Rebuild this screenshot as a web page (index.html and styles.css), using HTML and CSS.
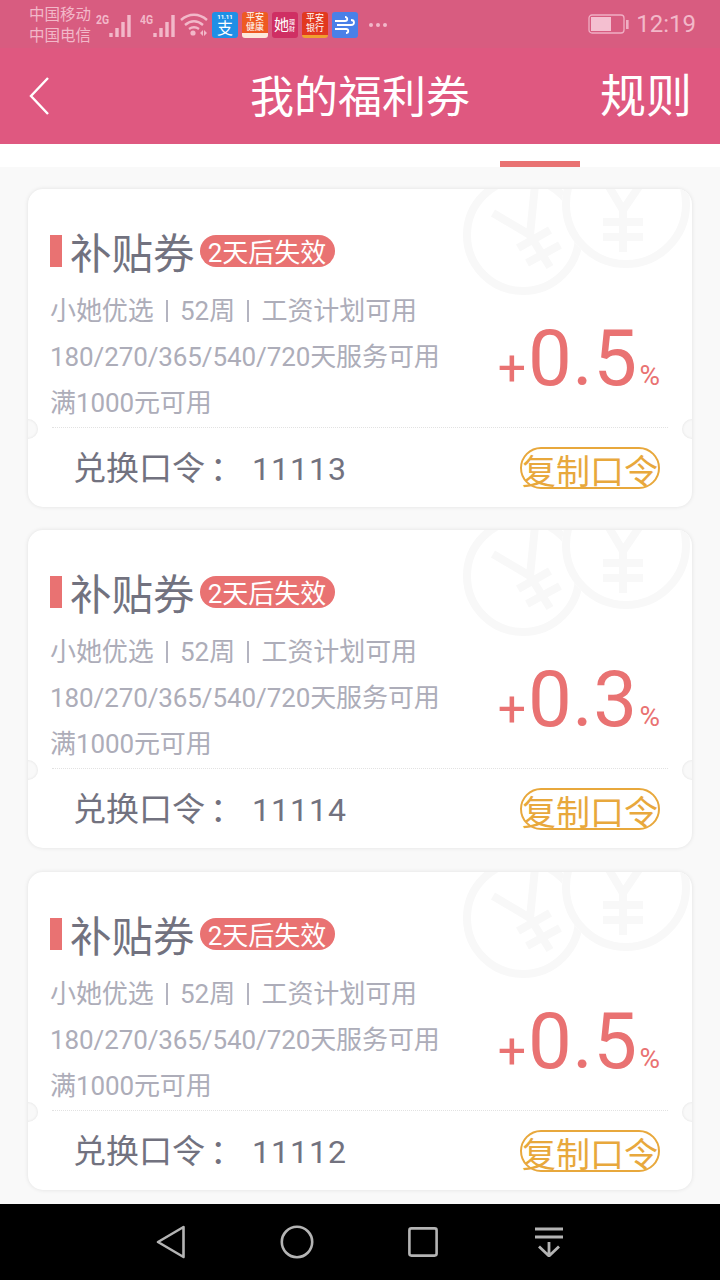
FILE: index.html
```html
<!DOCTYPE html>
<html lang="zh">
<head>
<meta charset="utf-8">
<title>我的福利券</title>
<link rel="stylesheet" href="styles.css">
</head>
<body>
<svg class="defs" width="0" height="0" aria-hidden="true">
  <defs>
    <symbol id="coins" viewBox="0 0 234 170">
      <g stroke="#f8f8f8" stroke-width="8" fill="none">
        <circle cx="64" cy="46" r="56"/>
        <path d="M34 24 L71 46 L76 -4 M71 46 L91 78 M59 59 L91 41 M68 74 L101 56"/>
      </g>
      <circle cx="167" cy="15" r="64" fill="#fff"/>
      <g stroke="#f8f8f8" stroke-width="8" fill="none">
        <circle cx="167" cy="15" r="60"/>
        <path d="M149 -4 L164 21 L181 -4 M164 21 V63 M144 33 H184 M144 48 H184"/>
      </g>
    </symbol>
  </defs>
</svg>
<div class="screen">
  <div class="status">
    <div class="carriers"><span>中国移动</span><span>中国电信</span></div>
    <div class="sig">
      <span class="net">2G</span>
      <svg width="24" height="26" viewBox="0 0 24 26"><path d="M2 21v4M8 16v9M14 10v15M20 3v22" stroke="#f2b8c9" stroke-width="3.4" fill="none"/></svg>
    </div>
    <div class="sig">
      <span class="net">4G</span>
      <svg width="24" height="26" viewBox="0 0 24 26"><path d="M2 21v4M8 16v9M14 10v15M20 3v22" stroke="#f2b8c9" stroke-width="3.4" fill="none"/></svg>
    </div>
    <svg class="wifi" width="28" height="24" viewBox="0 0 28 24"><g fill="none" stroke="#f2b8c9" stroke-width="2.4"><path d="M1 7c8-7 18-7 26 0M5 12c6-5 12-5 18 0M9 16c3-2 7-2 10 0"/></g><circle cx="13" cy="20" r="2.6" fill="#f2b8c9"/><path d="M20 20l3-3v6zM24 17l3 3-3 3z" fill="#f2b8c9"/></svg>
    <div class="apps">
      <div class="app app-blue"><span class="app-top">11.11</span><span class="app-big">支</span></div>
      <div class="app app-orange"><span class="app-mid">平安</span><span class="app-mid">健康</span></div>
      <div class="app app-pink"><span class="app-she">她</span><span class="app-side">理财</span></div>
      <div class="app app-red"><span class="app-mid">平安</span><span class="app-mid">银行</span></div>
      <div class="app app-wind"><svg width="22" height="18" viewBox="0 0 22 18"><path d="M1 5h10c3 0 3-4 0-4M3 9h14c4 0 4-5 0-5M1 13h11c3 0 3 4 0 4" fill="none" stroke="#fff" stroke-width="1.8"/></svg></div>
      <div class="dots"><i></i><i></i><i></i></div>
    </div>
    <div class="status-right">
      <svg width="41" height="22" viewBox="0 0 41 22"><rect x="1" y="2" width="35" height="18" rx="3" fill="none" stroke="#f0aec3" stroke-width="1.3"/><rect x="3" y="4" width="20" height="14" fill="#f4bfd0"/><rect x="38" y="7" width="2.6" height="9" fill="#f0aec3"/></svg>
      <span class="time">12:19</span>
    </div>
  </div>
  <header class="nav">
    <svg class="back" width="22" height="40" viewBox="0 0 22 40"><path d="M20 2 L3 20 L20 38" fill="none" stroke="#fff" stroke-width="2.4"/></svg>
    <h1 class="nav-title">我的福利券</h1>
    <span class="nav-rule">规则</span>
  </header>
  <div class="tabbar"><span class="tab-line"></span></div>
  <main class="list">
    <article class="card">
      <svg class="coins"><use href="#coins"/></svg>
      <span class="notch notch-l"></span><span class="notch notch-r"></span>
      <div class="card-body">
        <div class="card-left">
          <div class="title-row"><span class="mark"></span><span class="title">补贴券</span><span class="badge">2天后失效</span></div>
          <p class="line">小她优选<i class="sep"></i>52周<i class="sep"></i>工资计划可用</p>
          <p class="line">180/270/365/540/720天服务可用</p>
          <p class="line">满1000元可用</p>
        </div>
        <div class="amount"><span class="plus">+</span><span class="num">0.5</span><span class="pct">%</span></div>
      </div>
      <div class="card-foot">
        <div class="code"><span>兑换口令</span><span class="colon">：</span><span class="code-num">11113</span></div>
        <span class="copy">复制口令</span>
      </div>
    </article>
    <article class="card">
      <svg class="coins"><use href="#coins"/></svg>
      <span class="notch notch-l"></span><span class="notch notch-r"></span>
      <div class="card-body">
        <div class="card-left">
          <div class="title-row"><span class="mark"></span><span class="title">补贴券</span><span class="badge">2天后失效</span></div>
          <p class="line">小她优选<i class="sep"></i>52周<i class="sep"></i>工资计划可用</p>
          <p class="line">180/270/365/540/720天服务可用</p>
          <p class="line">满1000元可用</p>
        </div>
        <div class="amount"><span class="plus">+</span><span class="num">0.3</span><span class="pct">%</span></div>
      </div>
      <div class="card-foot">
        <div class="code"><span>兑换口令</span><span class="colon">：</span><span class="code-num">11114</span></div>
        <span class="copy">复制口令</span>
      </div>
    </article>
    <article class="card">
      <svg class="coins"><use href="#coins"/></svg>
      <span class="notch notch-l"></span><span class="notch notch-r"></span>
      <div class="card-body">
        <div class="card-left">
          <div class="title-row"><span class="mark"></span><span class="title">补贴券</span><span class="badge">2天后失效</span></div>
          <p class="line">小她优选<i class="sep"></i>52周<i class="sep"></i>工资计划可用</p>
          <p class="line">180/270/365/540/720天服务可用</p>
          <p class="line">满1000元可用</p>
        </div>
        <div class="amount"><span class="plus">+</span><span class="num">0.5</span><span class="pct">%</span></div>
      </div>
      <div class="card-foot">
        <div class="code"><span>兑换口令</span><span class="colon">：</span><span class="code-num">11112</span></div>
        <span class="copy">复制口令</span>
      </div>
    </article>
  </main>
  <nav class="sysnav">
    <svg width="30" height="34" viewBox="0 0 30 34"><path d="M27.500 2 L2 17 L27.500 32 Z" fill="none" stroke="#b4b4b4" stroke-width="2.6" stroke-linejoin="round"/></svg>
    <svg width="34" height="34" viewBox="0 0 34 34"><circle cx="17" cy="17" r="15.200" fill="none" stroke="#b4b4b4" stroke-width="2.6"/></svg>
    <svg width="30" height="30" viewBox="0 0 30 30"><rect x="1.400" y="1.400" width="27.200" height="27.200" rx="2" fill="none" stroke="#b4b4b4" stroke-width="2.6"/></svg>
    <svg width="28" height="30" viewBox="0 0 28 30"><path d="M0 2h28M0 10h28" stroke="#b4b4b4" stroke-width="3" fill="none"/><path d="M14 15v14M4 19.500L14 29l10-9.500" stroke="#b4b4b4" stroke-width="2.8" fill="none"/></svg>
  </nav>
</div>
</body>
</html>
```
FILE: styles.css
```css
* { box-sizing: border-box; margin: 0; padding: 0; }
html, body { width: 720px; height: 1280px; overflow: hidden; }
body {
  font-family: Roboto, "Noto Sans CJK SC", sans-serif;
  background: #f9f9f9;
}
.defs { position: absolute; }
.screen { width: 720px; height: 1280px; display: flex; flex-direction: column; }

.status {
  height: 48px;
  background: #d85c80;
  display: flex;
  align-items: center;
  padding-left: 29px;
  color: #f2b8c9;
}
.carriers { display: flex; flex-direction: column; font-size: 15.500px; line-height: 21px; width: 67px; margin-top: 4px; }
.sig { display: flex; align-items: flex-start; width: 44px; margin-top: 2px; }
.sig svg { margin-left: -1px; }
.net { font-size: 13px; font-weight: 700; line-height: 14px; width: 14px; transform: scaleX(.8); transform-origin: left; margin-top: 1px; }
.wifi { margin-top: 2px; margin-left: -4px; }
.apps { display: flex; align-items: center; gap: 4px; margin-left: 4px; margin-top: 1px; }
.app {
  width: 26px;
  height: 26px;
  border-radius: 3px;
  display: flex;
  flex-direction: column;
  align-items: center;
  justify-content: center;
  color: #fff;
  overflow: hidden;
}
.app-blue { background: #1f8fe6; }
.app-top { font-size: 6px; line-height: 7px; font-weight: 700; }
.app-big { font-size: 16px; line-height: 17px; color: #fff; }
.app-orange { background: #ee5a22; border-bottom: 5px solid #fde9dc; }
.app-mid { font-size: 9px; line-height: 10px; }
.app-pink { background: #cf2f63; flex-direction: row; }
.app-she { font-size: 15px; line-height: 20px; }
.app-side { font-size: 6px; line-height: 7px; width: 7px; }
.app-red { background: #e2381f; border-bottom: 3px solid #f0a030; }
.app-wind { background: #4a80e8; }
.dots { display: flex; gap: 3px; margin-left: 7px; }
.dots i { width: 4px; height: 4px; border-radius: 50%; background: #f2b8c9; }
.status-right { margin-left: auto; display: flex; align-items: center; gap: 7px; padding-right: 24px; }
.time { font-size: 24px; line-height: 30px; color: #f2b8c9; }

.nav {
  height: 96px;
  background: #df5880;
  display: flex;
  align-items: center;
  justify-content: space-between;
  padding: 0 28px;
  color: #fff;
  position: relative;
}
.nav-title {
  position: absolute;
  left: 0; right: 0;
  text-align: center;
  font-size: 44px;
  font-weight: 400;
  line-height: 100px;
  top: 0;
}
.nav-rule { font-size: 46px; line-height: 100px; }

.tabbar { height: 23px; background: #fff; padding: 17px 0 0 500px; flex: none; }
.tab-line { display: block; width: 80px; height: 6px; background: #e97272; }

.list {
  flex: 1;
  padding: 22px 28px 0;
  display: flex;
  flex-direction: column;
  gap: 23.400px;
}
.card {
  position: relative;
  height: 318px;
  flex: none;
  background: #fff;
  border-radius: 15px;
  box-shadow: 0 0 4px rgba(0, 0, 0, .1);
  overflow: hidden;
}
.coins { position: absolute; left: 431px; top: 0; width: 234px; height: 170px; }
.notch {
  position: absolute;
  top: 230px;
  width: 20px;
  height: 20px;
  border-radius: 50%;
  background: #f9f9f9;
  box-shadow: inset 0 0 3px rgba(0, 0, 0, .1);
}
.notch-l { left: -10px; }
.notch-r { right: -10px; }

.card-body {
  position: relative;
  height: 239px;
  margin: 0 24px 0 24px;
  border-bottom: 1px dotted #e2e2e2;
  display: flex;
  justify-content: space-between;
}
.card-left { padding-top: 40px; margin-left: -2px; }
.title-row { display: flex; align-items: center; height: 44px; margin-bottom: 15px; }
.mark { width: 12px; height: 32px; background: #e97272; margin-right: 8px; }
.title { font-size: 41.500px; line-height: 44px; color: #72727f; margin-top: 8px; }
.badge {
  margin-left: 5px;
  height: 32px;
  width: 135px;
  border-radius: 16px;
  background: #e97272;
  color: #fff;
  font-size: 26px;
  line-height: 37px;
  text-align: center;
  white-space: nowrap;
}
.line { font-size: 26px; line-height: 46px; color: #adadb9; white-space: nowrap; letter-spacing: -.1px; }
.sep { display: inline-block; width: 2px; height: 22px; background: #b4b4c0; margin: 0 12.500px 0 12px; vertical-align: -2px; }
.amount {
  align-self: flex-end;
  color: #e97272;
  display: flex;
  align-items: baseline;
  margin-bottom: 29px;
  margin-right: 8px;
}
.plus { font-size: 50px; line-height: 60px; margin-right: 2px; }
.num { font-size: 78px; line-height: 78px; letter-spacing: .4px; }
.pct { font-size: 28px; margin-left: 2px; }

.card-foot {
  height: 79px;
  display: flex;
  align-items: center;
  justify-content: space-between;
  padding: 1px 32px 0 45px;
}
.code { font-size: 33px; color: #72727f; display: flex; align-items: center; line-height: 44px; margin-top: 2px; }
.colon { width: 47px; padding-left: 5px; }
.code-num { font-size: 32px; letter-spacing: 1px; }
.copy {
  width: 140px;
  height: 42px;
  border: 2px solid #e8a83c;
  border-radius: 21px;
  color: #e8a83c;
  font-size: 34px;
  line-height: 46px;
  white-space: nowrap;
  display: flex;
  justify-content: center;
}

.sysnav {
  height: 76px;
  flex: none;
  background: #000;
  display: grid;
  grid-template-columns: repeat(4, 126px);
  justify-items: center;
  align-items: center;
  padding-left: 108px;
}
```
